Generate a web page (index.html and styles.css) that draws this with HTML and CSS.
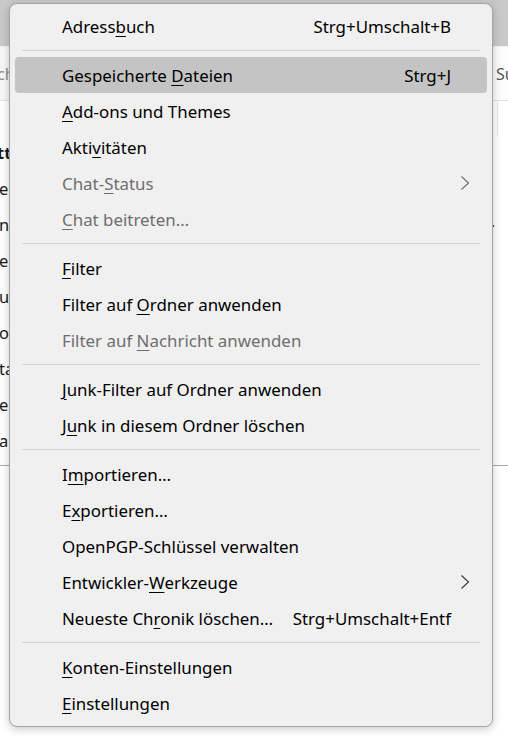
FILE: index.html
```html
<!DOCTYPE html>
<html lang="de">
<head>
<meta charset="utf-8">
<title>Menü</title>
<link rel="stylesheet" href="styles.css">
</head>
<body>
<div class="app">
  <div class="titlebar"></div>
  <div class="toolbar">
    <span class="search-left">ch</span>
    <span class="search-right">Suc</span>
  </div>
  <div class="content">
    <div class="left-col">
      <div class="frag bold">tt</div>
      <div class="frag">er</div>
      <div class="frag">n</div>
      <div class="frag">e</div>
      <div class="frag">u</div>
      <div class="frag">o</div>
      <div class="frag">ta</div>
      <div class="frag">er</div>
      <div class="frag">a</div>
    </div>
    <div class="mid"></div>
    <div class="right-col">
      <div class="rc-line"></div>
      <div class="rc-dot">.</div>
    </div>
  </div>
</div>

<div class="menu">
  <div class="item"><span class="label">Adress<u>b</u>uch</span><span class="key">Strg+Umschalt+B</span></div>
  <div class="sep"></div>
  <div class="item hover"><span class="label">Gespeicherte <u>D</u>ateien</span><span class="key">Strg+J</span></div>
  <div class="item"><span class="label"><u>A</u>dd-ons und Themes</span></div>
  <div class="item"><span class="label">Akti<u>v</u>itäten</span></div>
  <div class="item disabled sub"><span class="label">Chat-<u>S</u>tatus</span>
    <svg class="chev" width="10" height="16" viewBox="0 0 10 16"><path d="M1.5 1.5 L8.5 8 L1.5 14.5" fill="none" stroke="currentColor" stroke-width="1.1"/></svg>
  </div>
  <div class="item disabled"><span class="label"><u>C</u>hat beitreten…</span></div>
  <div class="sep"></div>
  <div class="item"><span class="label"><u>F</u>ilter</span></div>
  <div class="item"><span class="label">Filter auf <u>O</u>rdner anwenden</span></div>
  <div class="item disabled"><span class="label">Filter auf <u>N</u>achricht anwenden</span></div>
  <div class="sep"></div>
  <div class="item"><span class="label"><u>J</u>unk-Filter auf Ordner anwenden</span></div>
  <div class="item"><span class="label">J<u>u</u>nk in diesem Ordner löschen</span></div>
  <div class="sep"></div>
  <div class="item"><span class="label">I<u>m</u>portieren…</span></div>
  <div class="item"><span class="label">E<u>x</u>portieren…</span></div>
  <div class="item"><span class="label">OpenPGP-Schlüssel verwalten</span></div>
  <div class="item sub"><span class="label">Entwickler-<u>W</u>erkzeuge</span>
    <svg class="chev" width="10" height="16" viewBox="0 0 10 16"><path d="M1.5 1.5 L8.5 8 L1.5 14.5" fill="none" stroke="currentColor" stroke-width="1.1"/></svg>
  </div>
  <div class="item"><span class="label">Neueste Ch<u>r</u>onik löschen…</span><span class="key">Strg+Umschalt+Entf</span></div>
  <div class="sep"></div>
  <div class="item"><span class="label"><u>K</u>onten-Einstellungen</span></div>
  <div class="item"><span class="label"><u>E</u>instellungen</span></div>
</div>
</body>
</html>
```

FILE: styles.css
```css
html, body {
  margin: 0;
  padding: 0;
  background: #ffffff;
  font-family: "Noto Sans", "Open Sans", sans-serif;
}

.app {
  width: 508px;
  height: 738px;
  overflow: hidden;
  display: flex;
  flex-direction: column;
}

.titlebar {
  height: 46px;
  background: #c9c9c9;
  border-bottom: 1px solid #f4f4f4;
}

.toolbar {
  height: 53px;
  background: #f7f7f7;
  border-bottom: 1px solid #e2e2e2;
  display: flex;
  align-items: center;
  justify-content: space-between;
  font-size: 16px;
}

.search-left {
  color: #8a8a8a;
  margin-left: -3px;
}

.search-right {
  color: #555;
  background: #fcfcfc;
  align-self: stretch;
  display: flex;
  align-items: center;
  padding-left: 3px;
  width: 12px;
  border-left: 1px solid #ddd;
  overflow: hidden;
  white-space: nowrap;
}

.content {
  display: flex;
  height: 364px;
  border-bottom: 1px solid #a9a9a9;
}

.left-col {
  width: 10px;
  padding-top: 34px;
  overflow: hidden;
}

.frag {
  height: 36px;
  line-height: 36px;
  font-size: 16.5px;
  color: #1a1a1a;
  white-space: nowrap;
  margin-left: -1px;
}

.frag.bold {
  font-weight: 700;
  margin-left: -3px;
}

.mid {
  flex: 1;
}

.right-col {
  width: 15px;
  display: flex;
  flex-direction: column;
}

.rc-line {
  margin-left: 4px;
  width: 1px;
  height: 35px;
  background: #e4e4e4;
}

.rc-dot {
  margin-top: 76px;
  font-size: 15px;
  line-height: 18px;
  color: #222;
  margin-left: -2px;
}

.menu {
  position: absolute;
  left: 9px;
  top: 3px;
  width: 482px;
  padding: 4px 0 5px;
  background: #f0f0f0;
  border: 1px solid #a4a4a4;
  border-radius: 8px;
  box-shadow: 0 2px 8px rgba(0, 0, 0, 0.22);
  font-size: 16.9px;
  color: #000;
}

.item {
  height: 36px;
  margin: 0 5px;
  padding: 0 36px 0 47px;
  display: flex;
  align-items: center;
  border-radius: 4px;
  white-space: nowrap;
}

.item.sub {
  padding-right: 17px;
}

.item .label {
  flex: 1;
}

.item u {
  text-decoration-thickness: 1px;
  text-underline-offset: 3px;
}

.item.hover {
  background: #c4c4c4;
}

.item.disabled {
  color: #6e6e6e;
}

.chev {
  display: block;
  color: #333;
}

.item.disabled .chev {
  color: #6a6a6a;
}

.sep {
  height: 1px;
  margin: 6px 12px 6px;
  background: #d3d3d3;
}
```
